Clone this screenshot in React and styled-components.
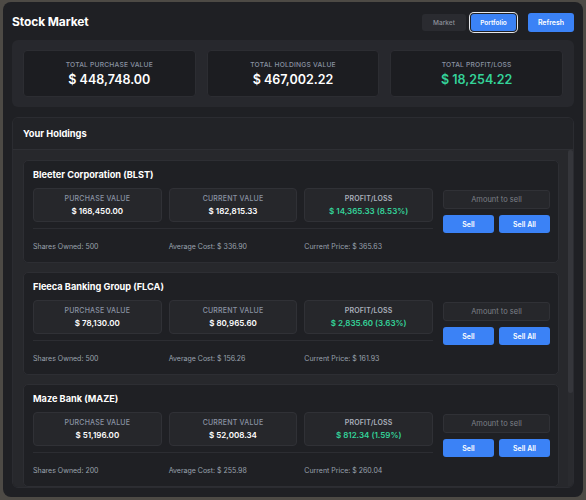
import React from "react";
import styled, { createGlobalStyle } from "styled-components";

const holdings = [
  {
    name: "Bleeter Corporation (BLST)",
    purchase: "$ 168,450.00",
    current: "$ 182,815.33",
    profit: "$ 14,365.33 (8.53%)",
    shares: 500,
    avg: "$ 336.90",
    price: "$ 365.63",
  },
  {
    name: "Fleeca Banking Group (FLCA)",
    purchase: "$ 78,130.00",
    current: "$ 80,965.60",
    profit: "$ 2,835.60 (3.63%)",
    shares: 500,
    avg: "$ 156.26",
    price: "$ 161.93",
  },
  {
    name: "Maze Bank (MAZE)",
    purchase: "$ 51,196.00",
    current: "$ 52,008.34",
    profit: "$ 812.34 (1.59%)",
    shares: 200,
    avg: "$ 255.98",
    price: "$ 260.04",
  },
];

// share of the list that is visible, for the scrollbar thumb
const visibleShare = 0.72;

const App = () => {
  return (
    <>
      <GlobalStyle />
      <Panel>
        <Header>
          <Title>Stock Market</Title>
          <HeaderButtons>
            <TabGroup>
              <Tab>Market</Tab>
              <Tab active>Portfolio</Tab>
            </TabGroup>
            <BlueButton wide>Refresh</BlueButton>
          </HeaderButtons>
        </Header>

        <Summary>
          <SummaryCard>
            <Label>Total Purchase Value</Label>
            <BigValue>$ 448,748.00</BigValue>
          </SummaryCard>
          <SummaryCard>
            <Label>Total Holdings Value</Label>
            <BigValue>$ 467,002.22</BigValue>
          </SummaryCard>
          <SummaryCard>
            <Label>Total Profit/Loss</Label>
            <BigValue green>$ 18,254.22</BigValue>
          </SummaryCard>
        </Summary>

        <Holdings>
          <HoldingsHeader>Your Holdings</HoldingsHeader>
          <HoldingsBody>
            <HoldingsList>
              {holdings.map((h) => (
                <HoldingCard key={h.name}>
                  <HoldingName>{h.name}</HoldingName>
                  <HoldingBody>
                    <HoldingInfo>
                      <StatRow>
                        <StatBox>
                          <Label small>Purchase Value</Label>
                          <StatValue>{h.purchase}</StatValue>
                        </StatBox>
                        <StatBox>
                          <Label small>Current Value</Label>
                          <StatValue>{h.current}</StatValue>
                        </StatBox>
                        <StatBox>
                          <Label small strong>
                            Profit/Loss
                          </Label>
                          <StatValue green>{h.profit}</StatValue>
                        </StatBox>
                      </StatRow>
                      <FooterRow>
                        <span>Shares Owned: {h.shares}</span>
                        <span>Average Cost: {h.avg}</span>
                        <span>Current Price: {h.price}</span>
                      </FooterRow>
                    </HoldingInfo>
                    <Actions>
                      <AmountInput placeholder="Amount to sell" />
                      <ActionButtons>
                        <BlueButton>Sell</BlueButton>
                        <BlueButton>Sell All</BlueButton>
                      </ActionButtons>
                    </Actions>
                  </HoldingBody>
                </HoldingCard>
              ))}
            </HoldingsList>
            <ScrollTrack>
              <ScrollThumb style={{ height: `${visibleShare * 100}%` }} />
            </ScrollTrack>
          </HoldingsBody>
        </Holdings>
      </Panel>
    </>
  );
};

export default App;

const GlobalStyle = createGlobalStyle`
  html, body {
    margin: 0;
    padding: 0;
    background: #4d4a45;
    font-family: Inter, "Liberation Sans", sans-serif;
    -webkit-font-smoothing: antialiased;
  }
  * {
    box-sizing: border-box;
  }
`;

const Panel = styled.div`
  width: 580px;
  height: 495px;
  margin: 2px 0 0 3px;
  background: #1f2024;
  border-radius: 8px;
  padding: 0 9px 9px 9px;
  display: flex;
  flex-direction: column;
  overflow: hidden;
`;

const Header = styled.div`
  height: 38px;
  display: flex;
  align-items: center;
  justify-content: space-between;
`;

const Title = styled.h1`
  margin: 0;
  font-size: 12px;
  font-weight: 700;
  color: #ffffff;
  letter-spacing: -0.1px;
`;

const HeaderButtons = styled.div`
  display: flex;
  align-items: center;
  gap: 12px;
  margin-top: 3px;
`;

const TabGroup = styled.div`
  display: flex;
  gap: 5px;
`;

const Tab = styled.button`
  width: ${(p) => (p.active ? "45px" : "44px")};
  height: 17px;
  border-radius: 3px;
  border: none;
  font-family: inherit;
  font-size: 6.5px;
  font-weight: ${(p) => (p.active ? 600 : 500)};
  color: ${(p) => (p.active ? "#ffffff" : "#8d929b")};
  background: ${(p) => (p.active ? "#3b82f6" : "#2a2b30")};
  box-shadow: ${(p) =>
    p.active ? "0 0 0 1px #1f2024, 0 0 0 2px #e5e7eb" : "none"};
  padding: 0;
`;

const BlueButton = styled.button`
  flex: ${(p) => (p.wide ? "none" : "1")};
  width: ${(p) => (p.wide ? "46px" : "auto")};
  height: ${(p) => (p.wide ? "19px" : "18px")};
  border: none;
  border-radius: 3px;
  background: #3b82f6;
  color: #ffffff;
  font-family: inherit;
  font-size: 7px;
  font-weight: 600;
  padding: 0;
`;

const Summary = styled.div`
  display: grid;
  grid-template-columns: repeat(3, 1fr);
  gap: 11px;
  padding: 10px 11px;
  background: #27282d;
  border-radius: 6px;
`;

const SummaryCard = styled.div`
  height: 47px;
  background: #1c1d21;
  border: 1px solid #2c2d32;
  border-radius: 4px;
  display: flex;
  flex-direction: column;
  align-items: center;
  justify-content: center;
  gap: 3px;
`;

const Label = styled.div`
  font-size: ${(p) => (p.small ? "7px" : "6.7px")};
  text-transform: uppercase;
  letter-spacing: 0.2px;
  color: ${(p) => (p.strong ? "#aab0bb" : "#8a93a3")};
  font-weight: ${(p) => (p.strong ? 600 : 500)};
`;

const BigValue = styled.div`
  font-size: 12.5px;
  font-weight: 600;
  color: ${(p) => (p.green ? "#34d399" : "#ffffff")};
`;

const Holdings = styled.div`
  margin-top: 10px;
  flex: 1;
  min-height: 0;
  display: flex;
  flex-direction: column;
  background: #232428;
  border: 1px solid #2b2c31;
  border-radius: 6px;
  overflow: hidden;
`;

const HoldingsHeader = styled.div`
  height: 32px;
  flex: none;
  display: flex;
  align-items: center;
  padding-left: 10px;
  font-size: 9.3px;
  font-weight: 700;
  color: #ffffff;
  border-bottom: 1px solid #2e2f34;
  background: #222327;
`;

const HoldingsBody = styled.div`
  flex: 1;
  min-height: 0;
  display: flex;
  background: #27282c;
`;

const HoldingsList = styled.div`
  flex: 1;
  min-width: 0;
  overflow: hidden;
  padding: 10px 9px 0 10px;
  display: flex;
  flex-direction: column;
  gap: 9px;
`;

const ScrollTrack = styled.div`
  width: 5px;
  flex: none;
  background: #2a2b2f;
`;

const ScrollThumb = styled.div`
  width: 100%;
  background: #35363b;
  border-radius: 3px;
`;

const HoldingCard = styled.div`
  flex: none;
  height: 103px;
  background: #1f2024;
  border: 1px solid #2d2e33;
  border-radius: 5px;
  padding: 8px 8px 0 9px;
`;

const HoldingName = styled.div`
  font-size: 9.2px;
  font-weight: 700;
  color: #ffffff;
  height: 12px;
  line-height: 12px;
`;

const HoldingBody = styled.div`
  display: flex;
  gap: 10px;
  margin-top: 7px;
`;

const HoldingInfo = styled.div`
  width: 400px;
  flex: none;
`;

const StatRow = styled.div`
  display: grid;
  grid-template-columns: repeat(3, 1fr);
  gap: 7px;
  padding-bottom: 6px;
  border-bottom: 1px solid #2c2d32;
`;

const StatBox = styled.div`
  height: 34px;
  background: #26272b;
  border: 1px solid #303136;
  border-radius: 4px;
  display: flex;
  flex-direction: column;
  align-items: center;
  justify-content: center;
  gap: 3px;
`;

const StatValue = styled.div`
  font-size: 8px;
  font-weight: 600;
  color: ${(p) => (p.green ? "#34d399" : "#ffffff")};
`;

const FooterRow = styled.div`
  display: grid;
  grid-template-columns: repeat(3, 1fr);
  gap: 7px;
  padding-top: 13px;
  font-size: 7px;
  color: #9aa2ae;
`;

const Actions = styled.div`
  flex: 1;
  display: flex;
  flex-direction: column;
  gap: 6px;
  padding-top: 2px;
`;

const AmountInput = styled.input`
  height: 19px;
  width: 100%;
  background: #26272b;
  border: 1px solid #303136;
  border-radius: 3px;
  color: #ffffff;
  text-align: center;
  font-family: inherit;
  font-size: 7.5px;
  outline: none;

  &::placeholder {
    color: #7d8088;
  }
`;

const ActionButtons = styled.div`
  display: flex;
  gap: 5px;
`;
